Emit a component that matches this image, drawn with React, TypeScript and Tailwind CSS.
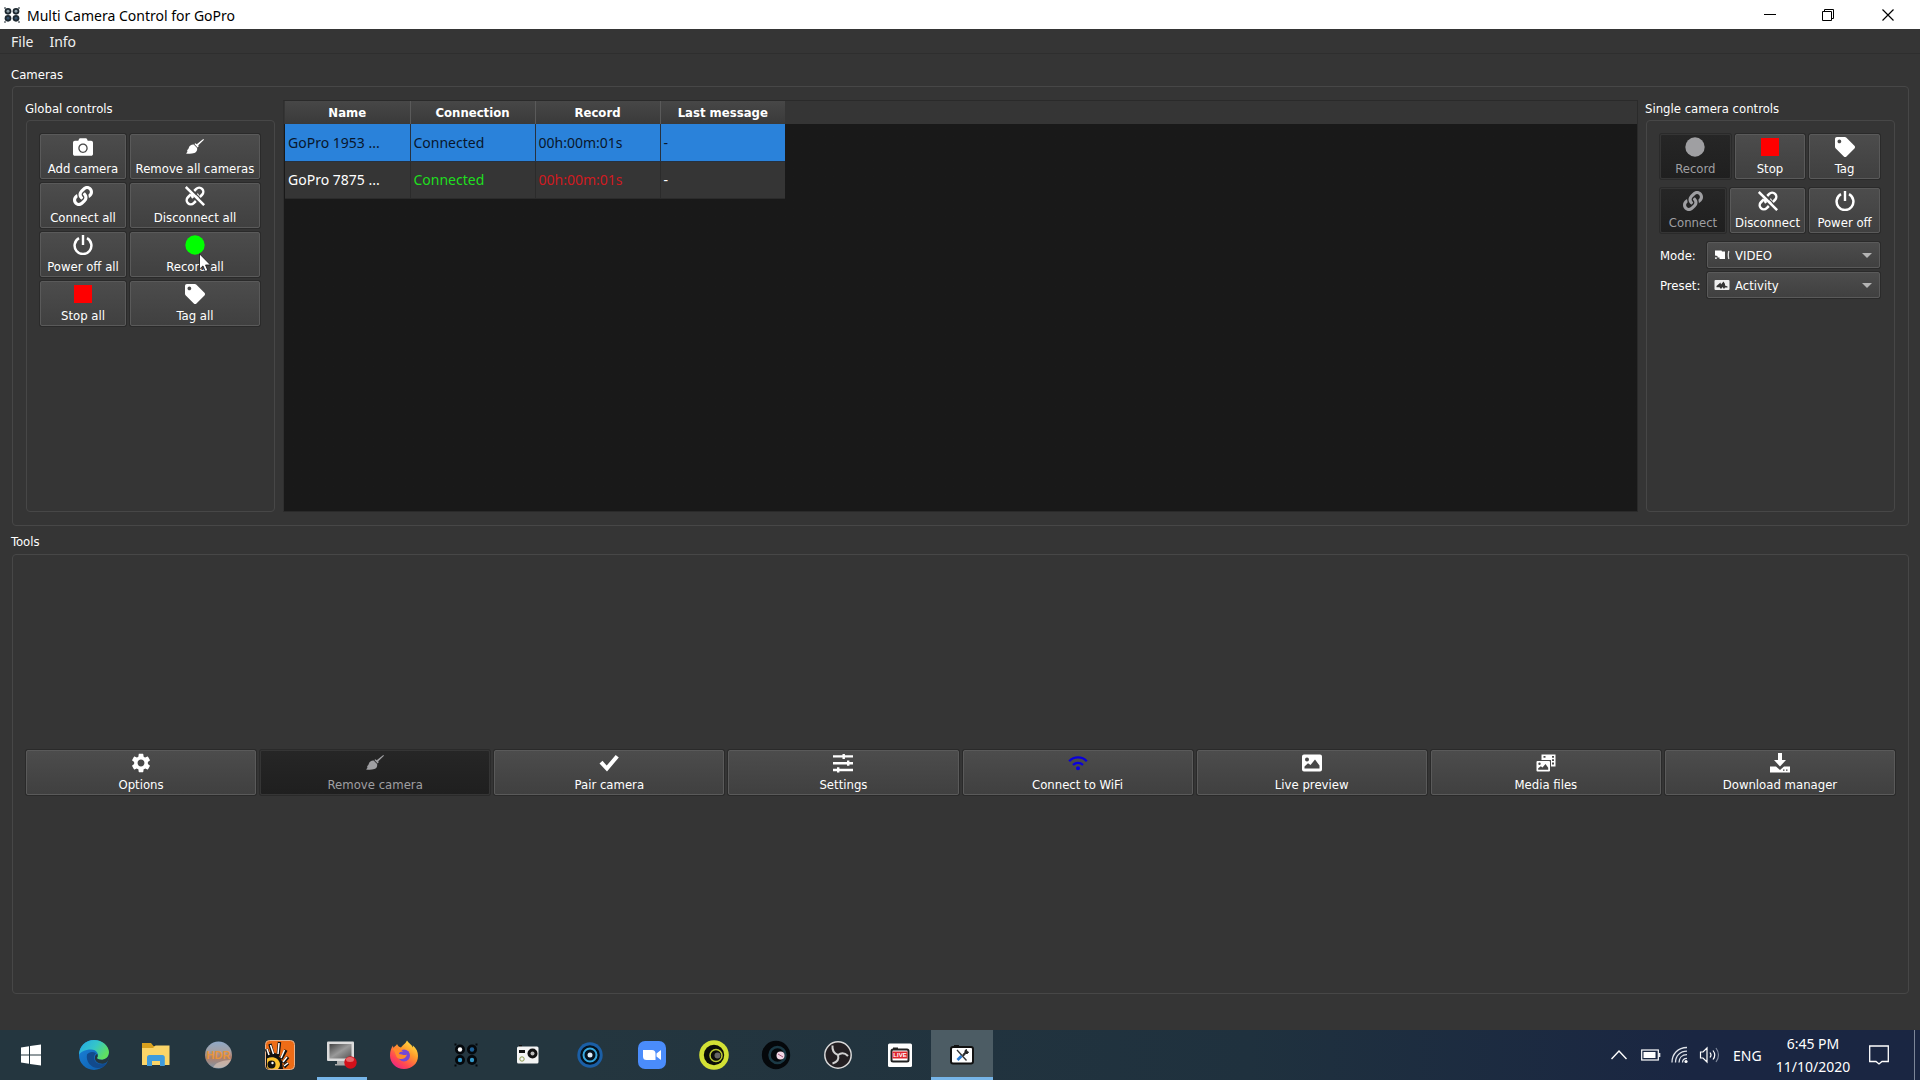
import React, { type ReactNode } from 'react';
import { FaCamera, FaLink, FaTag } from 'react-icons/fa';
import { MdSettings } from 'react-icons/md';

/* ---------- control icons ---------- */

function Glyph({ children, box = '0 0 20 20' }: { children: ReactNode; box?: string }) {
  return (
    <svg viewBox={box} className="size-5" fill="currentColor" aria-hidden="true">
      {children}
    </svg>
  );
}

const Broom = () => (
  <Glyph>
    <path d="M18.300 2 19 2.700 13.300 8.300 13.600 9.600 12.600 10.400 9.400 7.100 10.400 6.300 11.700 7.200Z" />
    <path d="M8.700 7.600 12.100 11.100C12.600 13.400 11.400 15.400 9.400 16.100 6.500 17 3.500 16.900 1 16.500 2 15.600 2.500 14.700 2.500 13.700L1.900 13.200C3 12.700 3.400 12 3.700 11 4.300 8.900 6.300 7.400 8.700 7.600Z" />
  </Glyph>
);

const Chain = () => <FaLink className="size-5" />;

const Unchain = () => (
  <Glyph box="0 0 24 24">
    <g fill="none" strokeWidth="3">
      <path d="M11 6 13.500 3.500a4.900 4.900 0 0 1 7 7l-3.600 3.600" stroke="currentColor" />
      <path d="M13 18 10.500 20.500a4.900 4.900 0 0 1-7-7l3.600-3.600" stroke="currentColor" />
      <path d="M14.300 9.700a4.500 4.500 0 0 1 0 5.600M9.700 14.300a4.500 4.500 0 0 1 0-5.600" stroke="currentColor" />
      <path d="M3 -.5 25 21.500" stroke="#464646" strokeWidth="1.600" />
      <path d="M1 1.200 23 23" stroke="currentColor" />
    </g>
  </Glyph>
);

const Power = () => (
  <Glyph>
    <path d="M6 3.200a8.400 8.400 0 1 0 8 0" fill="none" stroke="currentColor" strokeWidth="2.500" />
    <rect x="8.800" y="0" width="2.400" height="10" />
  </Glyph>
);

const Dot = () => (
  <Glyph>
    <circle cx="10" cy="10" r="9.700" />
  </Glyph>
);

const Square = () => (
  <Glyph>
    <rect x="1" y="1" width="18" height="18" />
  </Glyph>
);

const Check = () => (
  <Glyph>
    <path d="M0.500 10.500 3.500 7.800 7.700 12.600 16.700 2 19.800 4.500 8 18.400Z" />
  </Glyph>
);

const Sliders = () => (
  <Glyph>
    <path d="M0 2.200h20v2.400H0zM0 9h20v2.400H0zM0 15.800h20v2.400H0z" />
    <path d="M9.500 1h2.400v5H9.500zM14 7.500h2.400v5.200H14zM4 14.300h2.400v5.200H4z" />
  </Glyph>
);

const Wifi = () => (
  <Glyph>
    <g fill="none" stroke="currentColor" strokeWidth="2.200">
      <path d="M1.200 8.300a12 12 0 0 1 17.600 0" />
      <path d="M5 12a7 7 0 0 1 10 0" />
    </g>
    <circle cx="10" cy="15.300" r="2" />
  </Glyph>
);

const Picture = () => (
  <Glyph>
    <path
      fillRule="evenodd"
      d="M2 1.500h16a2 2 0 0 1 2 2v13a2 2 0 0 1-2 2H2a2 2 0 0 1-2-2v-13a2 2 0 0 1 2-2ZM5 4.500a2 2 0 1 0 0 4 2 2 0 0 0 0-4ZM2.500 15.500h15v-3L13 6.500 8.500 12 6 10.200 2.500 13.500Z"
    />
  </Glyph>
);

const Media = () => (
  <Glyph>
    <path
      fillRule="evenodd"
      d="M5.500 1.500h14v12h-4.500v-6.500h-9.500ZM7.500 3v1.800h2V3ZM16 3v1.800h2V3ZM16 6.300v1.800h2V6.300ZM16 9.600v1.800h2V9.600Z"
    />
    <path
      fillRule="evenodd"
      d="M1.500 8h11.500a1 1 0 0 1 1 1v8.500a1 1 0 0 1-1 1h-11.500a1 1 0 0 1-1-1v-8.500a1 1 0 0 1 1-1ZM3.500 9.500a1.200 1.200 0 1 0 0 2.400 1.200 1.200 0 0 0 0-2.400ZM2.200 16.700h10v-2L9.500 11 6.500 14.500 4.800 13.300 2.200 15.300Z"
    />
  </Glyph>
);

const Download = () => (
  <Glyph>
    <path d="M8 0h4v7h4L10 13.500 4 7h4z" />
    <path
      fillRule="evenodd"
      d="M0 13.500h6L10 17l4-3.500H20v6H0ZM13 16.500v1.300h1.500v-1.300ZM16 16.500v1.300h1.500v-1.300Z"
    />
  </Glyph>
);

/* ---------- shared controls ---------- */

const TAHOMA = "font-['DejaVu_Sans_Condensed','Noto_Sans',sans-serif]";

type ToolProps = { label: string; icon: ReactNode; tint?: string; disabled?: boolean; children?: ReactNode };

function ToolButton({ label, icon, tint = '', disabled = false, children }: ToolProps) {
  return (
    <button
      type="button"
      disabled={disabled}
      className={`relative flex h-[45px] w-full flex-col items-center gap-0.5 whitespace-nowrap rounded-xs border pt-0.5 text-[13px] leading-5 shadow-[0_0_0_1px_#2a2a2a] ${
        disabled
          ? 'border-[#353535] bg-linear-to-b from-[#262626] to-[#1f1f1f] text-[#9f9fa2]'
          : 'border-[#5a5a5a] bg-linear-to-b from-[#4c4c4c] to-[#404040] text-white'
      }`}
    >
      <span className={tint}>{icon}</span>
      <span>{label}</span>
      {children}
    </button>
  );
}

function Group({ title, className = '', children }: { title: string; className?: string; children: ReactNode }) {
  return (
    <section className="flex w-[249px] shrink-0 flex-col">
      <h3 className="-ml-px h-5 text-[13px] leading-[18px]">{title}</h3>
      <div className={`flex-1 rounded-sm border border-[#474747] py-[13px] pl-[13px] pr-3.5 ${className}`}>{children}</div>
    </section>
  );
}

function Pick({ id, label, value, icon }: { id: string; label: string; value: string; icon: ReactNode }) {
  return (
    <div className="flex items-center">
      <label htmlFor={id} className="w-[47px] pt-0.5 text-[13px]">
        {label}
      </label>
      <div className="relative flex-1">
        <select
          id={id}
          defaultValue={value}
          className="h-[26px] w-full appearance-none rounded-xs border border-[#5a5a5a] bg-linear-to-b from-[#4c4c4c] to-[#404040] pl-[27px] pt-0.5 text-[13px] text-white shadow-[0_0_0_1px_#2a2a2a]"
        >
          <option>{value}</option>
        </select>
        <svg viewBox="0 0 16 16" className="pointer-events-none absolute left-[7px] top-[5px] size-4" aria-hidden="true">
          {icon}
        </svg>
        <svg viewBox="0 0 10 5" className="pointer-events-none absolute right-2 top-[11px] h-[5px] w-2.5" aria-hidden="true">
          <path d="M0 0h10L5 5z" fill="#b4b4b4" />
        </svg>
      </div>
    </div>
  );
}

const VideoMark = (
  <>
    <path d="M1 3.500h6.500l.5 1h3V12H5.500V10.500H3.500V9L1 8.500Z" fill="#fff" />
    <path d="M1 10.300h1.800V12H1z" fill="#ddd" />
    <path d="M14.800 4q-1 4 0 8" stroke="#ddd" strokeWidth="1.300" fill="none" />
  </>
);

const ActivityMark = (
  <>
    <rect x="0.500" y="3" width="15" height="10" rx="1" fill="#eee" />
    <path d="M2.500 9 6.500 5.500l.5 2 2.500-3 1.500 2.500v1.500L13.500 9.500v1H11L10 12 8.500 10 7 12 5.500 10.200H2.500Z" fill="#333" />
  </>
);

/* ---------- camera table ---------- */

const HEADS = ['Name', 'Connection', 'Record', 'Last message'];
const CAMERAS = [
  { cells: ['GoPro 1953 ...', 'Connected', '00h:00m:01s', '-'], selected: true },
  { cells: ['GoPro 7875 ...', 'Connected', '00h:00m:01s', '-'], selected: false },
];
const PLAIN_TINTS = ['text-white', 'text-[#1fdf1f]', 'text-[#d01a20]', 'text-white'];

function CameraTable() {
  return (
    <div className="flex min-w-0 flex-1 flex-col border border-[#2a2a2a] border-l-[#2f2f2f] bg-linear-to-b from-[#353535] from-[23px] to-[#191919] to-[23px]">
      <table className="ml-px w-[500px] table-fixed border-collapse">
        <thead>
          <tr className="h-[23px] bg-linear-to-b from-[#474747] to-[#3a3a3a]">
            {HEADS.map((head) => (
              <th
                key={head}
                scope="col"
                className="border-r border-r-[#5a5a5a] p-0 text-[13px] leading-5 font-bold last:border-r-0"
              >
                {head}
              </th>
            ))}
          </tr>
        </thead>
        <tbody className="font-['Noto_Sans',sans-serif] text-[14px]">
          {CAMERAS.map((camera) => (
            <tr key={camera.cells[0]} className={`h-[37px] ${camera.selected ? 'bg-[#2a82da] text-[#08162c]' : 'bg-[#353535]'}`}>
              {camera.cells.map((cell, i) => (
                <td
                  key={i}
                  className={`border-r border-b px-[3px] py-0 last:border-r-0 ${
                    camera.selected ? 'border-[#26313f]' : `border-[#2b2b2b] ${PLAIN_TINTS[i]}`
                  }`}
                >
                  {cell}
                </td>
              ))}
            </tr>
          ))}
        </tbody>
      </table>
    </div>
  );
}

/* ---------- taskbar ---------- */

function QuadLens({ dark }: { dark?: boolean }) {
  const rim = dark ? '#04080c' : '#1d2830';
  const cores = dark ? ['#fff', '#1d5f95', '#3498c9', '#3498c9'] : ['#8fa0a8', '#8fa0a8', '#34506a', '#34506a'];
  return (
    <>
      <path d="M4.500 4.500h2v2h-2zM25.500 4.500h2v2h-2zM4.500 25.500h2v2h-2zM25.500 25.500h2v2h-2z" fill={rim} />
      {[
        [10, 10.5],
        [22, 10.5],
        [10, 21],
        [22, 21],
      ].map(([cx, cy], i) => (
        <g key={i}>
          <circle cx={cx} cy={cy} r="5" fill={rim} />
          <circle cx={cx} cy={cy} r="2.200" fill={cores[i]} />
        </g>
      ))}
    </>
  );
}

const APPS: { name: string; art: ReactNode; state?: 'open' | 'active' }[] = [
  { name: 'Start', art: <path d="M5 8.500 13 7.300V15.500H5ZM14 7.100 25 5.500V15.500H14ZM5 16.500h8v8.200L5 23.500ZM14 16.500h11V26.500L14 24.900Z" fill="#fff" /> },
  {
    name: 'Edge',
    art: (
      <>
        <defs>
          <linearGradient id="edgeTop" x1="0" x2="1" y1="0" y2=".5">
            <stop offset="0" stopColor="#22a7e8" />
            <stop offset=".55" stopColor="#35c5c9" />
            <stop offset="1" stopColor="#5fe060" />
          </linearGradient>
          <linearGradient id="edgeLow" x1="0" x2="1" y1="0" y2="1">
            <stop offset="0" stopColor="#1b84dc" />
            <stop offset="1" stopColor="#0c59a6" />
          </linearGradient>
        </defs>
        <circle cx="16" cy="16" r="15" fill="url(#edgeLow)" />
        <path d="M9 15.500c-1.500 7 4 13.500 11 13.500 4 0 7.500-2 9.200-5-6 3-13 .5-13.200-5.500 0-2 1-3.300 2-4.300-3-2-7-1.500-9 1.300Z" fill="#124a8c" />
        <path d="M1 16C1 7.500 7.500 1 16 1s15 6 15 12.500c0 5-4 7.300-7.600 7.300-3 0-4.600-1.200-4.400-2 2.500-3-.2-8.300-6-8.300C7 10.500 2 13 1 16Z" fill="url(#edgeTop)" />
        <path d="M19 18.800c-.2.800 1.400 2 4.400 2 3.600 0 7.600-2.300 7.600-7.300 1 7-2 10.500-5 11-5 1-10-2-9-7 .5-1.500 1.500-2.300 2.300-2.600.6 1.500.6 2.900-.3 3.900Z" fill="#24363f" />
      </>
    ),
  },
  {
    name: 'File Explorer',
    art: (
      <>
        <path d="M2 4h9l2.500 3H29v4H2z" fill="#d9a11e" />
        <path d="M2 9h11l2.500-2.500H29.500V26H2z" fill="#fbd568" />
        <path d="M7 27v-8.500A2.500 2.500 0 0 1 9.500 16h12.800a2.500 2.500 0 0 1 2.500 2.500V27H20v-5h-8v5z" fill="#3f9bdc" />
      </>
    ),
  },
  {
    name: 'HDR Projects',
    art: (
      <>
        <defs>
          <linearGradient id="hdr" x1="0" x2="0" y1="0" y2="1">
            <stop offset="0" stopColor="#8fa9c8" />
            <stop offset=".35" stopColor="#a3a0a4" />
            <stop offset=".6" stopColor="#b0806a" />
            <stop offset="1" stopColor="#7f98ad" />
          </linearGradient>
        </defs>
        <circle cx="16.500" cy="16" r="13.500" fill="url(#hdr)" />
        <path d="M11 28.500c4-7 10-6 18-8-2 5-6 8-12 8.500z" fill="#e5c9b8" opacity=".6" />
        <text x="16.500" y="20" textAnchor="middle" fontSize="11" fontWeight="bold" fontFamily="Liberation Sans, sans-serif" fill="#e8953a">
          HDR
        </text>
      </>
    ),
  },
  {
    name: 'Eye',
    art: (
      <>
        <rect x="1.500" y="1.500" width="29" height="29" rx="4" fill="#ee6c16" stroke="#e8b48e" />
        <path d="M2 14c6-2 12-1 16 8l1 8H5.500A3.500 3.500 0 0 1 2 26.500Z" fill="#111" />
        <path d="m5 17-2.500-7M9 16 6 5M14 17 15.500 3M17 20l5-9M19 24l5-6M20 28l4-4" stroke="#111" strokeWidth="3.400" />
        <path d="m5 16-2-6M9.500 15 6.500 6M14 15 15 4M17 19l3.500-8M19 23l4-5M20 27l4-3" stroke="#fff" strokeWidth="1.500" />
        <path d="M3 19.500c6-3 12 0 13 5.500 0 2-1 4-2 5H6c-2 0-3-1-3-3z" fill="#fbc22e" />
        <circle cx="7.500" cy="25.500" r="4" fill="#111" />
        <circle cx="8.500" cy="24" r="1.200" fill="#fff" />
      </>
    ),
  },
  {
    name: 'Screen recorder',
    state: 'open',
    art: (
      <>
        <defs>
          <linearGradient id="screen" x1="0" x2="1" y1="0" y2="1">
            <stop offset="0" stopColor="#444" />
            <stop offset=".5" stopColor="#999" />
            <stop offset="1" stopColor="#555" />
          </linearGradient>
        </defs>
        <path d="M11 20h9v5h3v1.500H9V25h2z" fill="#aaa" />
        <rect x="1" y="2.500" width="27" height="19.500" rx="1" fill="#dcdcdc" />
        <rect x="3.500" y="5" width="22" height="14.500" fill="url(#screen)" />
        <circle cx="24.500" cy="23.500" r="6.200" fill="#d3101a" />
        <ellipse cx="24" cy="20.500" rx="4" ry="2.500" fill="#f08a8a" opacity=".7" />
      </>
    ),
  },
  {
    name: 'Firefox',
    art: (
      <>
        <defs>
          <linearGradient id="fox" x1=".9" x2=".2" y1="0" y2="1">
            <stop offset="0" stopColor="#fff04a" />
            <stop offset=".4" stopColor="#ff9a2b" />
            <stop offset=".75" stopColor="#ff4652" />
            <stop offset="1" stopColor="#e8228a" />
          </linearGradient>
        </defs>
        <path d="M19 1.500c2 3 4.500 4 6 7 .2-.8 0-1.500-.3-2.200C28.500 9.500 30 13 30 17c0 7.500-6 13-14 13S2 24 2 16.500C2 12 3.500 8.500 5 6.500c0 1 .2 1.700.5 2.200C7 7 8.500 6.500 9 5c.5 1.500 2 3 4 3.500C14.500 6 17 5.500 19 1.500Z" fill="url(#fox)" />
        <circle cx="16" cy="16.500" r="6" fill="#7548d6" />
        <path d="M4 10c4-2 8-1 11 2.500-3 0-4 1-4 2.500 3 0 5 2 8 .5-1 4-5 5.500-8.500 4C7 18 8 12 4 10Z" fill="#ff8a2b" />
      </>
    ),
  },
  { name: 'Multi Camera Control', art: <QuadLens dark /> },
  {
    name: 'Camera tool',
    art: (
      <>
        <path d="M7 6h3v2H7z" fill="#111" />
        <rect x="5" y="7.500" width="21.500" height="17" rx="1.500" fill="#f4f4f4" />
        <rect x="7" y="11" width="6" height="3" fill="#111" />
        <circle cx="10" cy="20" r="2.200" fill="none" stroke="#8a9a4a" />
        <circle cx="20.500" cy="14.500" r="5" fill="#111" />
        <circle cx="20.500" cy="14.500" r="2" fill="#bbb" />
      </>
    ),
  },
  {
    name: 'Lens',
    art: (
      <>
        <circle cx="16" cy="16" r="12.700" fill="#1b5fa6" />
        <circle cx="16" cy="16" r="9.800" fill="#05121d" />
        <circle cx="16" cy="16" r="6.500" fill="none" stroke="#39a9e0" strokeWidth="2" />
        <circle cx="16" cy="16" r="2.500" fill="#dceefa" />
      </>
    ),
  },
  {
    name: 'Zoom',
    art: (
      <>
        <rect x="2" y="2" width="28" height="28" rx="7" fill="#4a8cfb" />
        <path d="M7 11h9a3.500 3.500 0 0 1 3.500 3.500v6.500h-9A3.500 3.500 0 0 1 7 17.500ZM20.500 14.500 25 11v10l-4.500-3.500z" fill="#fff" />
      </>
    ),
  },
  {
    name: 'Orbit',
    art: (
      <>
        <circle cx="16" cy="16" r="14.800" fill="#d3e135" />
        <circle cx="16" cy="16" r="10.200" fill="#0b0d08" />
        <circle cx="18" cy="16.500" r="6" fill="none" stroke="#b9c832" strokeWidth="1.500" />
        <circle cx="19.500" cy="16.500" r="3" fill="#666" />
      </>
    ),
  },
  {
    name: 'Dark lens',
    art: (
      <>
        <circle cx="16" cy="16" r="14.200" fill="#05080b" />
        <circle cx="17.500" cy="16" r="8" fill="none" stroke="#1b3945" strokeWidth="2.500" />
        <circle cx="20.500" cy="16.500" r="4" fill="#f3d7e4" />
        <path d="m18 15 5 3" stroke="#a55a7c" />
      </>
    ),
  },
  {
    name: 'OBS',
    art: (
      <>
        <circle cx="16" cy="16" r="13.200" fill="#231f22" stroke="#d8d8d8" strokeWidth="1.500" />
        <g fill="none" stroke="#d0d0d0" strokeWidth="2">
          <path d="M10.500 6.500c-.5 5 1.500 8 5.500 9.500" />
          <path d="M26 17c-4-4-7.500-3-10-1" />
          <path d="M10.500 24.500c5-1.500 6.500-5 5.500-8.500" />
        </g>
      </>
    ),
  },
  {
    name: 'Live',
    art: (
      <>
        <rect x="4" y="4.500" width="24" height="23.500" rx="1.500" fill="#fff" />
        <rect x="7.500" y="10.500" width="17" height="12" rx="1.500" fill="#fff" stroke="#222" strokeWidth="2" />
        <path d="M9 8.500h5v2H9z" fill="#222" />
        <rect x="8.500" y="12.500" width="15" height="7" fill="#e0262e" />
        <text x="16" y="18.200" textAnchor="middle" fontSize="6" fontWeight="bold" fontFamily="Liberation Sans, sans-serif" fill="#fff">
          LIVE
        </text>
      </>
    ),
  },
  {
    name: 'Camera tools',
    state: 'active',
    art: (
      <>
        <path d="M8 6h5v3H8z" fill="#111" />
        <rect x="5" y="8" width="22" height="16.500" rx="2" fill="#fff" stroke="#111" strokeWidth="2" />
        <path d="m11 11 9.500 10.500" stroke="#333" strokeWidth="1.300" />
        <path d="m17 15.500 2-2.300v-1.700l1.500-1 .3 2 1.700.5-1 1.500h-1.700L17.500 17Z" fill="#222" stroke="#222" />
        <path d="m15.500 17-4 4" stroke="#2c7bd0" strokeWidth="2.800" />
      </>
    ),
  },
];

function Taskbar() {
  return (
    <footer className="flex h-[50px] shrink-0 bg-linear-to-r from-[#24363f] from-30% via-[#1f313e] via-65% to-[#1a2642] to-88%">
      <nav className="flex pl-px" aria-label="Taskbar">
        {APPS.map(({ name, art, state }) => (
          <button
            key={name}
            type="button"
            aria-label={name}
            className={`relative flex w-[62px] items-center justify-center ${state === 'active' ? 'bg-[#4c5c64]' : ''}`}
          >
            <svg viewBox="0 0 32 32" className="size-8" aria-hidden="true">
              {art}
            </svg>
            {state && (
              <span className={`absolute bottom-0 h-[3px] bg-[#76b5e8] ${state === 'active' ? 'inset-x-0' : 'inset-x-[6px]'}`} />
            )}
          </button>
        ))}
      </nav>
      <div className="ml-auto flex items-center font-['Noto_Sans',sans-serif] text-[14px] leading-[23px] text-white">
        <svg viewBox="0 0 16 16" className="mr-3.5 size-4" fill="none" stroke="#fff" strokeWidth="1.400" aria-hidden="true">
          <path d="m.5 12 7.500-8 7.500 8" />
        </svg>
        <svg viewBox="0 0 20 12" className="mr-2.5 h-3 w-5" aria-hidden="true">
          <rect x=".7" y="1" width="16.600" height="10" fill="none" stroke="#fff" strokeWidth="1.200" />
          <rect x="2.500" y="3" width="12" height="6" fill="#fff" />
          <path d="M18.700 4v4" stroke="#fff" strokeWidth="1.200" />
        </svg>
        <svg viewBox="0 0 18 18" className="mr-2.5 size-[18px]" fill="none" stroke="#dfe3ea" strokeWidth="1.300" aria-hidden="true">
          <path d="M1 16.500C1 8 7 1.500 16 1.500M4.500 16.500C4.500 10 9 5.200 16 5.200M8 16.500c0-4.500 3-7.800 8-7.800M11.500 16.500c0-2.500 1.500-4.200 4.500-4.200" />
          <circle cx="15" cy="15.500" r="1.600" fill="#fff" stroke="none" />
        </svg>
        <svg viewBox="0 0 22 18" className="mr-3 h-[18px] w-[22px]" fill="none" stroke="#fff" strokeWidth="1.200" aria-hidden="true">
          <path d="M1.500 6h2.500l4-4v14l-4-4H1.500zM11 6.500q2 2.500 0 5M14 4.500q3.500 4.500 0 9" />
          <path d="M17 2q5 7 0 14" stroke="#7d879b" />
        </svg>
        <span className="w-[30px]">ENG</span>
        <time className="ml-2.5 w-20 text-center" dateTime="2020-11-10T18:45">
          6:45 PM
          <br />
          11/10/2020
        </time>
        <svg viewBox="0 0 20 20" className="ml-4 mr-[25px] size-5" fill="none" stroke="#fff" strokeWidth="1.300" aria-hidden="true">
          <path d="M.7 1h18.600v15.500h-6.300L10 19l-3-2.500H.7z" />
        </svg>
        <span className="mr-[5px] h-full w-px bg-[#7c8698]" />
      </div>
    </footer>
  );
}

/* ---------- window ---------- */

export default function App() {
  return (
    <div className={`flex min-h-screen flex-col bg-[#353535] text-white ${TAHOMA}`}>
      <header className="flex h-[29px] shrink-0 items-center bg-white pl-1 font-['Noto_Sans',sans-serif] text-[14px] text-black">
        <svg viewBox="4 4 24 24" className="size-4" aria-hidden="true">
          <QuadLens />
        </svg>
        <h1 className="ml-[7px] mt-0.5">Multi Camera Control for GoPro</h1>
        <div className="ml-auto mr-px flex">
          <button type="button" aria-label="Minimize" className="flex w-[58px] justify-center">
            <svg viewBox="0 0 12 12" className="size-3" stroke="#000" aria-hidden="true">
              <path d="M0 5.500h12" />
            </svg>
          </button>
          <button type="button" aria-label="Restore" className="flex w-[58px] justify-center">
            <svg viewBox="0 0 12 12" className="size-3" fill="none" stroke="#000" aria-hidden="true">
              <path d="M.5 2.500h9v9h-9zM2.500 2.500v-2h9v9h-2" />
            </svg>
          </button>
          <button type="button" aria-label="Close" className="flex w-[62px] justify-center">
            <svg viewBox="0 0 12 12" className="size-3" stroke="#000" strokeWidth="1.200" aria-hidden="true">
              <path d="m.5.5 11 11m0-11-11 11" />
            </svg>
          </button>
        </div>
      </header>

      <nav className="flex h-[25px] shrink-0 items-center gap-4 border-b border-[#2e2e2e] pl-[11px] font-['Noto_Sans',sans-serif] text-[14px] text-[#f0f0f0]">
        <button type="button">File</button>
        <button type="button">Info</button>
      </nav>

      <main className="flex grow flex-col pt-1 pr-[11px] pb-9 pl-3">
        <section className="flex grow basis-0 flex-col">
          <h2 className="-ml-px h-7 pt-2 text-[13px] leading-[18px]">Cameras</h2>
          <div className="flex grow gap-2 rounded-sm border border-[#474747] p-[13px]">
            <Group title="Global controls">
              <div className="grid grid-cols-[86fr_130fr] gap-1">
                <ToolButton label="Add camera" icon={<FaCamera className="size-5" />} />
                <ToolButton label="Remove all cameras" icon={<Broom />} />
                <ToolButton label="Connect all" icon={<Chain />} />
                <ToolButton label="Disconnect all" icon={<Unchain />} />
                <ToolButton label="Power off all" icon={<Power />} />
                <ToolButton label="Record all" icon={<Dot />} tint="text-[#00ff00]">
                  <svg viewBox="0 0 12 19" className="absolute left-[68px] top-5 h-[19px] w-3" aria-hidden="true">
                    <path d="M.5.8v15.400l3.500-3.300 2.300 5.500 2.500-1-2.300-5.400h5z" fill="#fff" stroke="#111" strokeWidth=".8" />
                  </svg>
                </ToolButton>
                <ToolButton label="Stop all" icon={<Square />} tint="text-[#ff0000]" />
                <ToolButton label="Tag all" icon={<FaTag className="size-5" />} />
              </div>
            </Group>

            <CameraTable />

            <Group title="Single camera controls" className="flex flex-col gap-[9px]">
              <div className="grid grid-cols-3 gap-1">
                <ToolButton label="Record" icon={<Dot />} disabled />
                <ToolButton label="Stop" icon={<Square />} tint="text-[#ff0000]" />
                <ToolButton label="Tag" icon={<FaTag className="size-5" />} />
              </div>
              <div className="grid grid-cols-[66fr_75fr_71fr] gap-1">
                <ToolButton label="Connect" icon={<Chain />} disabled />
                <ToolButton label="Disconnect" icon={<Unchain />} />
                <ToolButton label="Power off" icon={<Power />} />
              </div>
              <div className="flex flex-col gap-1">
                <Pick id="mode" label="Mode:" value="VIDEO" icon={VideoMark} />
                <Pick id="preset" label="Preset:" value="Activity" icon={ActivityMark} />
              </div>
            </Group>
          </div>
        </section>

        <section className="flex grow basis-0 flex-col">
          <h2 className="-ml-px h-7 pt-[7px] text-[13px] leading-[18px]">Tools</h2>
          <div className="grid grow grid-cols-8 items-center gap-1 rounded-sm border border-[#474747] px-[13px] pb-1">
            <ToolButton label="Options" icon={<MdSettings className="size-5 scale-115" />} />
            <ToolButton label="Remove camera" icon={<Broom />} disabled />
            <ToolButton label="Pair camera" icon={<Check />} />
            <ToolButton label="Settings" icon={<Sliders />} />
            <ToolButton label="Connect to WiFi" icon={<Wifi />} tint="text-[#0a00dc]" />
            <ToolButton label="Live preview" icon={<Picture />} />
            <ToolButton label="Media files" icon={<Media />} />
            <ToolButton label="Download manager" icon={<Download />} />
          </div>
        </section>
      </main>

      <Taskbar />
    </div>
  );
}
